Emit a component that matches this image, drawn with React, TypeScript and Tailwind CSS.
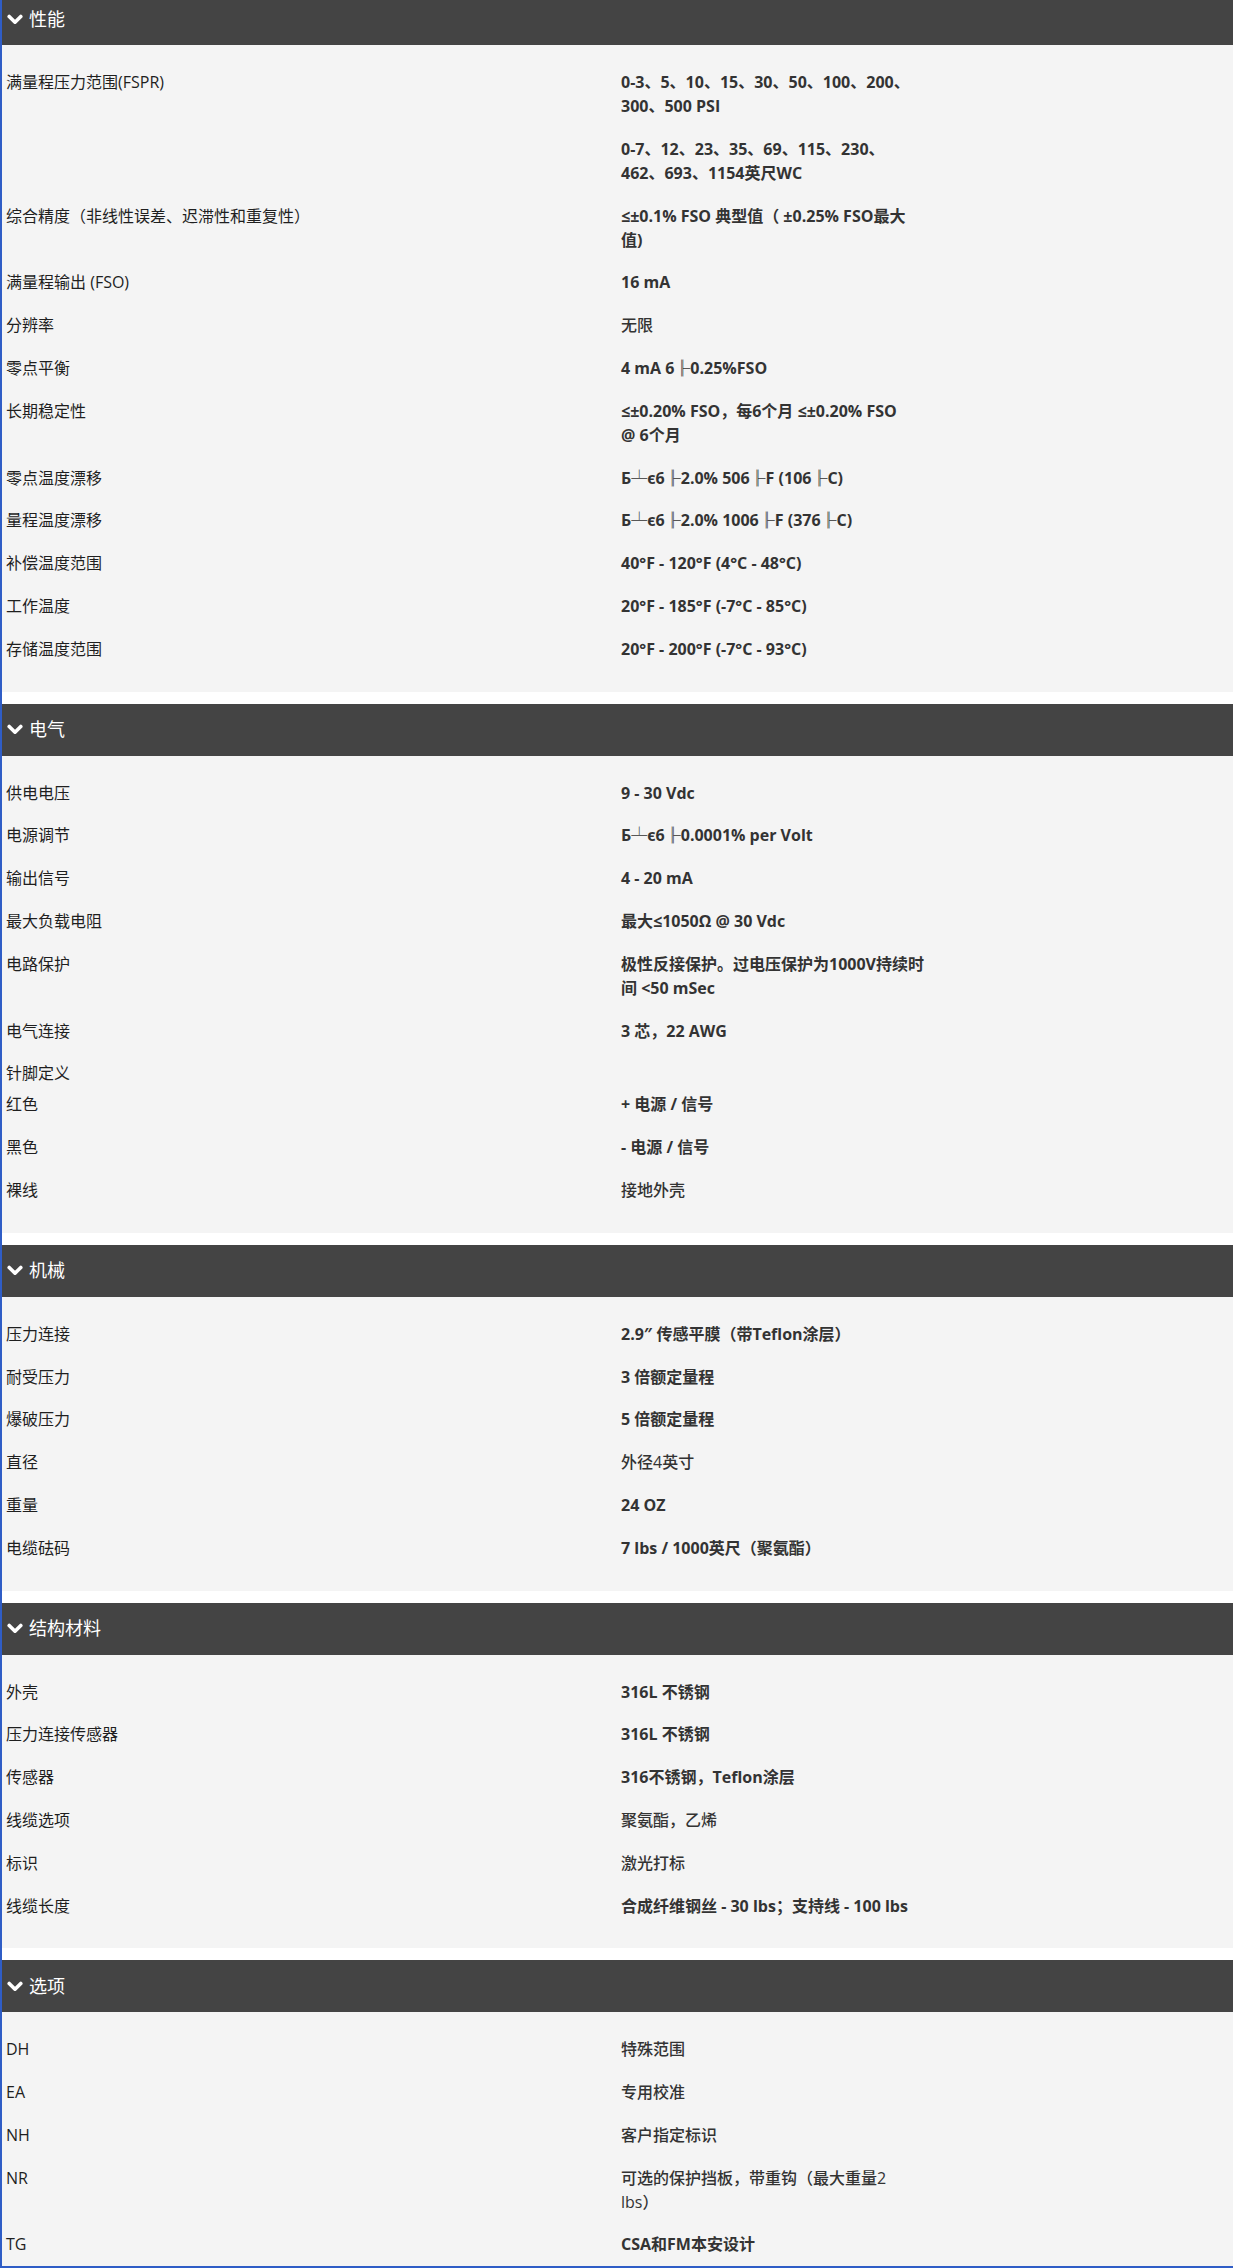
import React from "react";

type Row = { label: string; value?: string[]; plain?: boolean; tight?: boolean };
type Section = { title: string; rows: Row[] };

const sections: Section[] = [
  {
    title: "性能",
    rows: [
      { label: "满量程压力范围(FSPR)", value: ["0-3、5、10、15、30、50、100、200、", "300、500 PSI"] },
      { label: "", value: ["0-7、12、23、35、69、115、230、", "462、693、1154英尺WC"] },
      { label: "综合精度（非线性误差、迟滞性和重复性）", value: ["≤±0.1% FSO 典型值（ ±0.25% FSO最大", "值)"] },
      { label: "满量程输出 (FSO)", value: ["16 mA"] },
      { label: "分辨率", value: ["无限"], plain: true },
      { label: "零点平衡", value: ["4 mA 6╟0.25%FSO"] },
      { label: "长期稳定性", value: ["≤±0.20% FSO，每6个月 ≤±0.20% FSO", "@ 6个月"] },
      { label: "零点温度漂移", value: ["Б┴є6╟2.0% 506╟F (106╟C)"] },
      { label: "量程温度漂移", value: ["Б┴є6╟2.0% 1006╟F (376╟C)"] },
      { label: "补偿温度范围", value: ["40°F - 120°F (4°C - 48°C)"] },
      { label: "工作温度", value: ["20°F - 185°F (-7°C - 85°C)"] },
      { label: "存储温度范围", value: ["20°F - 200°F (-7°C - 93°C)"] },
    ],
  },
  {
    title: "电气",
    rows: [
      { label: "供电电压", value: ["9 - 30 Vdc"] },
      { label: "电源调节", value: ["Б┴є6╟0.0001% per Volt"] },
      { label: "输出信号", value: ["4 - 20 mA"] },
      { label: "最大负载电阻", value: ["最大≤1050Ω @ 30 Vdc"] },
      { label: "电路保护", value: ["极性反接保护。过电压保护为1000V持续时", "间 <50 mSec"] },
      { label: "电气连接", value: ["3 芯，22 AWG"] },
      { label: "针脚定义", tight: true },
      { label: "红色", value: ["+ 电源 / 信号"] },
      { label: "黑色", value: ["- 电源 / 信号"] },
      { label: "裸线", value: ["接地外壳"], plain: true },
    ],
  },
  {
    title: "机械",
    rows: [
      { label: "压力连接", value: ["2.9″ 传感平膜（带Teflon涂层）"] },
      { label: "耐受压力", value: ["3 倍额定量程"] },
      { label: "爆破压力", value: ["5 倍额定量程"] },
      { label: "直径", value: ["外径4英寸"], plain: true },
      { label: "重量", value: ["24 OZ"] },
      { label: "电缆砝码", value: ["7 lbs / 1000英尺（聚氨酯）"] },
    ],
  },
  {
    title: "结构材料",
    rows: [
      { label: "外壳", value: ["316L 不锈钢"] },
      { label: "压力连接传感器", value: ["316L 不锈钢"] },
      { label: "传感器", value: ["316不锈钢，Teflon涂层"] },
      { label: "线缆选项", value: ["聚氨酯，乙烯"], plain: true },
      { label: "标识", value: ["激光打标"], plain: true },
      { label: "线缆长度", value: ["合成纤维钢丝 - 30 lbs；支持线 - 100 lbs"] },
    ],
  },
  {
    title: "选项",
    rows: [
      { label: "DH", value: ["特殊范围"], plain: true },
      { label: "EA", value: ["专用校准"], plain: true },
      { label: "NH", value: ["客户指定标识"], plain: true },
      { label: "NR", value: ["可选的保护挡板，带重钩（最大重量2", "lbs）"], plain: true },
      { label: "TG", value: ["CSA和FM本安设计"] },
    ],
  },
];

const Chevron = () => (
  <svg viewBox="0 0 16 11" className="w-4 h-[11px] shrink-0" fill="none">
    <path d="M2.2 2.4 L8 8.2 L13.8 2.4" stroke="white" strokeWidth="3.6" strokeLinecap="round" strokeLinejoin="round" />
  </svg>
);

const App = () => {
  return (
    <div
      className="h-[2268px] overflow-hidden bg-white border-l-2 border-b-2 border-[#2f5dc6]"
      style={{ fontFamily: '"Open Sans", "Noto Sans CJK SC", sans-serif' }}
    >
      <div className="-mt-[7px]">
        {sections.map((section, i) => (
          <section key={section.title} className={i > 0 ? "mt-3" : ""}>
            {/* header bar */}
            <div className="h-[52px] bg-[#444444] flex items-center pl-[5px] gap-[6px] text-white text-[18px]">
              <Chevron />
              <span>{section.title}</span>
            </div>

            {/* spec rows */}
            <div className="bg-[#f4f4f4] pt-[25px] pb-3">
              {section.rows.map((row, j) => (
                <div
                  key={j}
                  className={`flex text-[16px] leading-[24px] ${row.tight ? "pb-[7px]" : "pb-[18.8px]"}`}
                >
                  <div className="w-[619px] shrink-0 pl-1 text-[#1f1f1f]">{row.label}</div>
                  {row.value && (
                    <div
                      className={`whitespace-nowrap text-[#333333] ${row.plain ? "font-medium" : "font-bold"}`}
                    >
                      {row.value.map((line, k) => (
                        <div key={k}>{line}</div>
                      ))}
                    </div>
                  )}
                </div>
              ))}
            </div>
          </section>
        ))}
      </div>
    </div>
  );
};

export default App;
